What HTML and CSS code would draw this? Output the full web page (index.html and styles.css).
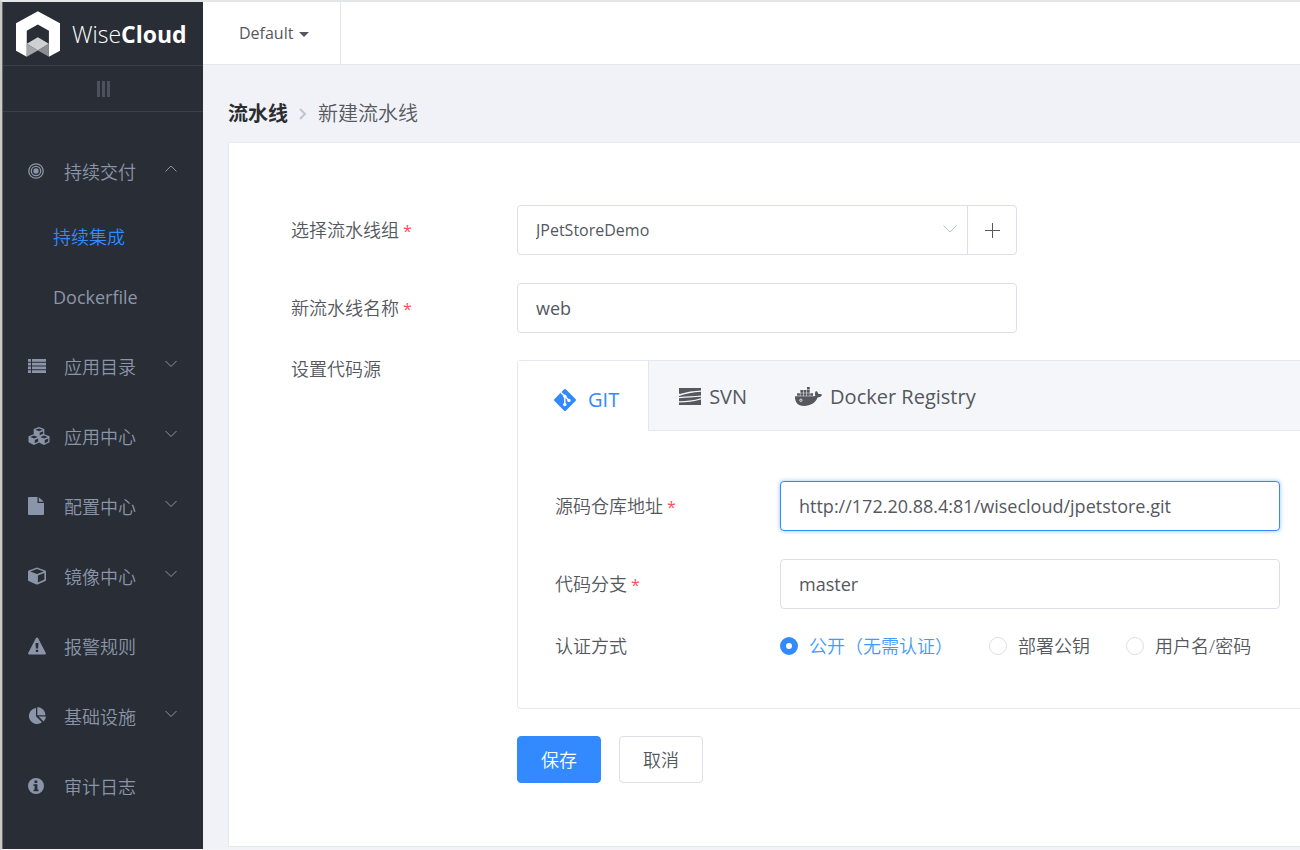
FILE: index.html
```html
<!DOCTYPE html>
<html lang="zh-CN">
<head>
<meta charset="utf-8">
<title>WiseCloud - 新建流水线</title>
<link rel="stylesheet" href="styles.css">
</head>
<body>
<div class="app">
  <aside class="sidebar">
    <a class="brand" href="#">
      <svg class="brand-mark" viewBox="48 32 131 136" aria-hidden="true">
        <path fill="#fff" d="M113 32 48 68v82l32 18V90l33-18 33 18v78l33-18V68z"/>
        <path fill="#cfd0d2" d="m113 110 33 19-33 20-33-20z"/>
        <path fill="#a3a5a8" d="m80 129 33 20-33 19z"/>
        <path fill="#8b8d92" d="m146 129-33 20 33 19z"/>
      </svg>
      <span class="brand-name">Wise<b>Cloud</b></span>
    </a>
    <button class="collapse" type="button" aria-label="收起菜单"><i></i><i></i><i></i></button>
    <nav class="menu">
      <a class="item" href="#">
        <svg class="icon" viewBox="0 0 16 16"><g fill="none" stroke="currentColor" stroke-width="1.3"><circle cx="8" cy="8" r="7.2"/><circle cx="8" cy="8" r="4.7"/></g><circle cx="8" cy="8" r="2.7" fill="currentColor"/></svg>
        <span>持续交付</span>
        <svg class="chevron" viewBox="0 0 12 8"><path d="m.5 6.500 5.500-5.500 5.500 5.500"/></svg>
      </a>
      <div class="submenu">
        <a class="subitem active" href="#">持续集成</a>
        <a class="subitem" href="#">Dockerfile</a>
      </div>
      <a class="item" href="#">
        <svg class="icon wide" viewBox="0 0 18 14"><path fill="currentColor" d="M0 0h3v2.700H0zM4 0h14v2.700H4zM0 3.800h3v2.700H0zM4 3.800h14v2.700H4zM0 7.600h3v2.700H0zM4 7.600h14v2.700H4zM0 11.300h3V14H0zM4 11.300h14V14H4z"/></svg>
        <span>应用目录</span>
        <svg class="chevron" viewBox="0 0 12 8"><path d="m.5 1 5.500 5.500 5.500-5.500"/></svg>
      </a>
      <a class="item" href="#">
        <svg class="icon cubes" viewBox="0 0 22 18"><path fill="currentColor" fill-rule="evenodd" d="m11 0 5.300 2.100v5.100L21.500 9.300v6L16 18l-5-2.400L6 18l-5.500-2.700v-6l5.200-2.100V2.100zM11 1.400 7.300 2.800 11 4.300l3.700-1.500zM11.700 8.300l3.400-1.500V4.200l-3.400 1.500zM6 8.600 2.300 10.100 6 11.600l3.700-1.500zM6.700 16.200l3.500-1.800v-3l-3.500 1.500zM16 8.600l-3.700 1.500 3.700 1.500 3.700-1.500zM16.700 16.200l3.500-1.800v-3l-3.500 1.500z"/></svg>
        <span>应用中心</span>
        <svg class="chevron" viewBox="0 0 12 8"><path d="m.5 1 5.500 5.500 5.500-5.500"/></svg>
      </a>
      <a class="item" href="#">
        <svg class="icon" viewBox="0 0 16 18"><path fill="currentColor" d="M1 0h8.500v6H16v11a1 1 0 0 1-1 1H1a1 1 0 0 1-1-1V1a1 1 0 0 1 1-1zm9.800.2L15.800 4.800h-5z"/></svg>
        <span>配置中心</span>
        <svg class="chevron" viewBox="0 0 12 8"><path d="m.5 1 5.500 5.500 5.500-5.500"/></svg>
      </a>
      <a class="item" href="#">
        <svg class="icon wide" viewBox="0 0 18 17"><path fill="currentColor" fill-rule="evenodd" d="m9 0 8.300 3q.7.300.7 1v8.600q0 .7-.6 1L9.600 17h-1.200L.6 13.600q-.6-.3-.6-1V4q0-.7.7-1zM9 1.600 2.200 4 9 6.600 15.800 4zM9.900 15l6.500-3V5.500L9.900 8z"/></svg>
        <span>镜像中心</span>
        <svg class="chevron" viewBox="0 0 12 8"><path d="m.5 1 5.500 5.500 5.500-5.500"/></svg>
      </a>
      <a class="item" href="#">
        <svg class="icon wide" viewBox="0 0 18 17"><path fill="currentColor" fill-rule="evenodd" d="M8 .6q1-1.200 2 0l7.800 14.900q.4 1.300-1 1.500H1.200q-1.400-.2-1-1.500zM7.500 5.500l.4 5.500h2.200l.4-5.500zM7.800 12.300v2.300h2.400v-2.300z"/></svg>
        <span>报警规则</span>
      </a>
      <a class="item" href="#">
        <svg class="icon wide" viewBox="0 0 18 18"><path fill="currentColor" d="M8 1v8.300l5.900 5.900A8 8 0 1 1 8 1zM9.300 0A8.300 8.300 0 0 1 17.500 8.300H9.300zM10.700 9.600H18a8 8 0 0 1-2.400 5z"/></svg>
        <span>基础设施</span>
        <svg class="chevron" viewBox="0 0 12 8"><path d="m.5 1 5.500 5.500 5.500-5.500"/></svg>
      </a>
      <a class="item" href="#">
        <svg class="icon" viewBox="0 0 16 16"><path fill="currentColor" fill-rule="evenodd" d="M8 0a8 8 0 1 1 0 16A8 8 0 0 1 8 0zM6.500 2.600v2.300h2.800V2.600zM5.500 6.300v1.700h1.100v3.500H5.500v1.800h5v-1.800H9.400V6.300z"/></svg>
        <span>审计日志</span>
      </a>
    </nav>
  </aside>

  <div class="main">
    <header class="topbar">
      <button class="project" type="button">Default <span class="caret"></span></button>
    </header>
    <nav class="crumbs" aria-label="breadcrumb">
      <a href="#">流水线</a>
      <svg class="crumb-sep" viewBox="0 0 8 12"><path d="m1 1 5 5-5 5"/></svg>
      <span>新建流水线</span>
    </nav>

    <form class="card">
      <div class="row">
        <label class="label" for="group">选择流水线组<em>*</em></label>
        <div class="group">
          <div class="select">
            <select id="group"><option>JPetStoreDemo</option></select>
            <svg class="select-arrow" viewBox="0 0 14 8"><path d="m.5.500 6.500 6.500 6.500-6.500"/></svg>
          </div>
          <button class="add" type="button" aria-label="新增"><svg viewBox="0 0 15 15"><path d="M7.500 0v15M0 7.500h15"/></svg></button>
        </div>
      </div>
      <div class="row">
        <label class="label" for="name">新流水线名称<em>*</em></label>
        <input class="input" id="name" type="text" value="web">
      </div>
      <div class="row top">
        <span class="label">设置代码源</span>
        <section class="source">
          <div class="tabs" role="tablist">
            <button class="tab current" type="button" role="tab" aria-selected="true">
              <svg class="git" viewBox="0 0 22 22"><path fill="currentColor" d="M9.900.5q1.100-1 2.200 0l9.400 9.400q1 1.100 0 2.200l-9.400 9.400q-1.100 1-2.200 0L.5 12.100q-1-1.100 0-2.200z"/><g stroke="#fff" stroke-width="1.400" fill="none"><path d="M7 3.500 10.800 7.300V15M10.800 7.300l4 4"/></g><g fill="#fff"><circle cx="10.800" cy="7.300" r="1.700"/><circle cx="14.900" cy="11.400" r="1.700"/><circle cx="10.800" cy="15.600" r="1.700"/></g></svg>
              <span>GIT</span>
            </button>
            <button class="tab" type="button" role="tab" aria-selected="false">
              <svg class="svn" viewBox="0 0 22 17"><g fill="currentColor"><path d="M0 0h22v2.500C15 2.800 7 4 1 6L0 5.500z"/><path d="M22 3.800v3.800C15 8.200 8 8.400 0 9V8C6 6 14 4.200 22 3.800z"/><path d="M0 10.200C8 9.800 15 9.200 22 8.800v1.400C14 12.600 8 13 0 13.300z"/><path d="M22 11.500V17H0v-2.400C8 14.300 15 13.500 22 11.500z"/></g></svg>
              <span>SVN</span>
            </button>
            <button class="tab" type="button" role="tab" aria-selected="false">
              <svg class="docker" viewBox="0 32 640 448"><path fill="currentColor" d="M349.900 236.300h-66.100v-59.400h66.100v59.400zm0-204.300h-66.100v60.700h66.100V32zm78.200 144.800H362v59.400h66.100v-59.400zm-156.300-72.100h-66.100v60.100h66.100v-60.100zm78.100 0h-66.100v60.100h66.100v-60.100zm276.800 100c-14.400-9.700-47.600-13.200-73.100-8.400-3.300-24-16.700-44.900-41.100-63.700l-14-9.300-9.300 14c-18.400 27.800-23.400 73.600-3.700 103.800-8.700 4.700-25.800 11.100-48.400 10.700H2.400c-8.700 50.800 5.800 116.800 44 162.100 37.100 43.900 92.700 66.200 165.400 66.200 157.400 0 273.900-72.500 328.400-204.200 21.400.4 67.600.1 91.300-45.200 1.500-2.500 6.600-13.200 8.500-17.100l-13.300-8.900zm-511.100-27.900h-66v59.400h66.100v-59.400zm78.100 0h-66.100v59.400h66.100v-59.400zm78.100 0h-66.100v59.400h66.100v-59.400zm-78.100-72.100h-66.100v60.100h66.100v-60.100z"/><circle cx="140" cy="345" r="28" fill="none" stroke="#f4f6fa" stroke-width="20"/></svg>
              <span>Docker Registry</span>
            </button>
          </div>
          <div class="panel">
            <div class="row">
              <label class="label" for="repo">源码仓库地址<em>*</em></label>
              <input class="input focused" id="repo" type="text" value="http://172.20.88.4:81/wisecloud/jpetstore.git">
            </div>
            <div class="row">
              <label class="label" for="branch">代码分支<em>*</em></label>
              <input class="input" id="branch" type="text" value="master">
            </div>
            <div class="row tight" role="radiogroup" aria-label="认证方式">
              <span class="label">认证方式</span>
              <div class="radios">
                <label class="radio"><input type="radio" name="auth" checked><span>公开（无需认证）</span></label>
                <label class="radio"><input type="radio" name="auth"><span>部署公钥</span></label>
                <label class="radio"><input type="radio" name="auth"><span>用户名/密码</span></label>
              </div>
            </div>
          </div>
        </section>
      </div>
      <div class="actions">
        <button class="btn primary" type="submit">保存</button>
        <button class="btn" type="button">取消</button>
      </div>
    </form>
  </div>
</div>
</body>
</html>
```

FILE: styles.css
```css
* { box-sizing: border-box; }

body {
  margin: 0;
  font: 350 18px/24px "Open Sans", "Noto Sans CJK SC", sans-serif;
  color: #55585e;
  background: #f0f2f7;
}

button, input, select { font: inherit; color: inherit; }
button { cursor: pointer; }
a { color: inherit; text-decoration: none; }
svg { display: block; flex: none; }

.app {
  display: flex;
  min-height: 100vh;
  border-left: 2px solid #c9c9c6;
  border-top: 2px solid #e4e6ea;
  border-bottom: 1px solid #f4f5f8;
  overflow: hidden;
}

/* Sidebar */
.sidebar { flex: 0 0 201px; background: #292d35; color: #8b95a9; border-left: 1px solid #66686b; }
.brand {
  display: flex;
  align-items: center;
  gap: 12px;
  height: 64px;
  padding-left: 13px;
  border-bottom: 1px solid #3a3f49;
  color: #fff;
}
.brand-mark { width: 44px; height: 46px; }
.brand-name { font-size: 23px; font-weight: 300; line-height: 32px; }
.brand-name b { font-weight: 700; }
.collapse {
  display: flex;
  align-items: center;
  justify-content: center;
  gap: 2px;
  width: 100%;
  height: 46px;
  padding: 0;
  border: 0;
  border-bottom: 1px solid #3a3f49;
  background: none;
}
.collapse i { width: 3px; height: 16px; background: #4c515d; }
.menu { padding-top: 25px; }
.item {
  display: flex;
  align-items: center;
  height: 70px;
  padding: 0 26px 0 25px;
}
.item span { flex: 1; }
.icon { width: 16px; height: 18px; margin: 0 20px 3px 0; }
.icon.wide { width: 18px; margin-right: 18px; }
.icon.cubes { width: 22px; margin-right: 14px; }
.chevron { width: 12px; height: 8px; margin-bottom: 7px; fill: none; stroke: #8b95a9; }
.submenu { padding-bottom: 5px; }
.subitem { display: flex; align-items: center; height: 60px; padding-left: 50px; font-weight: 400; }
.subitem.active { color: #338aff; font-weight: 350; }

/* Main column */
.main { flex: 1; min-width: 0; }
.topbar { display: flex; height: 63px; background: #fff; border-bottom: 1px solid #e2e6ef; }
.project {
  display: flex;
  align-items: center;
  gap: 6px;
  padding: 0 31px 0 36px;
  border: 0;
  border-right: 1px solid #e2e6ef;
  background: none;
  font-size: 16px;
  font-weight: 400;
}
.caret { margin-top: 3px; border: 5px solid transparent; border-top-color: #55585e; border-bottom: 0; }
.crumbs {
  display: flex;
  align-items: center;
  gap: 11px;
  padding: 33px 25px 12px;
  font-size: 20px;
  line-height: 32px;
}
.crumbs a { font-weight: 700; color: #2b2d31; }
.crumb-sep { width: 8px; height: 12px; fill: none; stroke: #bfc5d1; stroke-width: 2; }

.card {
  margin-left: 25px;
  padding: 62px 0 63px 62px;
  background: #fff;
  border: 1px solid #e6e9f1;
  border-right: 0;
}

/* Form rows */
.row { display: flex; align-items: center; margin-bottom: 28px; }
.row.top { align-items: flex-start; margin: -1px 0 27px; }
.row.tight { margin-top: -3px; }
.label { flex: 0 0 226px; }
.label em { margin-left: 4px; color: #ff4d5a; font-style: normal; font-weight: 400; font-size: 16px; }
.row.top > .label { margin-top: -3px; }
.input {
  width: 500px;
  height: 50px;
  padding: 0 18px;
  border: 1px solid #dcdfe9;
  border-radius: 4px;
  background: #fff;
  font-weight: 400;
  outline: 0;
}
.input.focused { border-color: #338aff; box-shadow: 0 0 4px #8fbfff; }
.group {
  display: flex;
  width: 500px;
  height: 50px;
  border: 1px solid #dcdfe9;
  border-radius: 4px;
}
.select { position: relative; flex: 1; }
.select select {
  width: 100%;
  height: 100%;
  padding: 0 40px 0 18px;
  border: 0;
  background: none;
  appearance: none;
  outline: 0;
  font-size: 16px;
  font-weight: 400;
}
.select-arrow {
  position: absolute;
  right: 10px;
  top: 19px;
  width: 14px;
  height: 8px;
  fill: none;
  stroke: #b7bdcc;
  pointer-events: none;
}
.add {
  display: flex;
  align-items: center;
  justify-content: center;
  width: 49px;
  padding: 0;
  border: 0;
  border-left: 1px solid #dcdfe9;
  background: none;
}
.add svg { width: 15px; height: 15px; stroke: #55585e; }

/* Code source box */
.source { flex: 1; border: 1px solid #e4e7f0; border-right: 0; border-radius: 4px 0 0 4px; }
.tabs { display: flex; height: 70px; background: #f4f6fa; }
.tab {
  display: flex;
  align-items: center;
  gap: 8px;
  padding: 2px 0 0 48px;
  border: 0;
  border-bottom: 1px solid #e4e7f0;
  background: none;
  font-size: 20px;
  font-weight: 400;
}
.tab:last-child { flex: 1; }
.tab.current {
  gap: 12px;
  padding: 7px 29px 0 36px;
  border-right: 1px solid #e4e7f0;
  border-bottom: 0;
  background: #fff;
  color: #338aff;
}
.tab.current + .tab { padding-left: 30px; }
.git { width: 22px; height: 22px; }
.svn { width: 22px; height: 17px; }
.docker { width: 27px; height: 19px; }
.panel { padding: 50px 0 22px 37px; }
.panel .label { flex-basis: 225px; }

.radios { display: flex; gap: 36px; }
.radio { display: flex; align-items: center; gap: 11px; }
.radio input {
  width: 18px;
  height: 18px;
  margin: 0;
  appearance: none;
  border: 1px solid #dcdfe6;
  border-radius: 50%;
  background: #fff;
}
.radio input:checked { border: 6px solid #338aff; }
.radio input:checked + span { color: #409bff; }

.actions { display: flex; gap: 18px; padding-left: 226px; }
.btn {
  width: 84px;
  height: 47px;
  padding: 0;
  border: 1px solid #dcdfe9;
  border-radius: 4px;
  background: #fff;
}
.btn.primary { border-color: #338aff; background: #338aff; color: #fff; }
```
